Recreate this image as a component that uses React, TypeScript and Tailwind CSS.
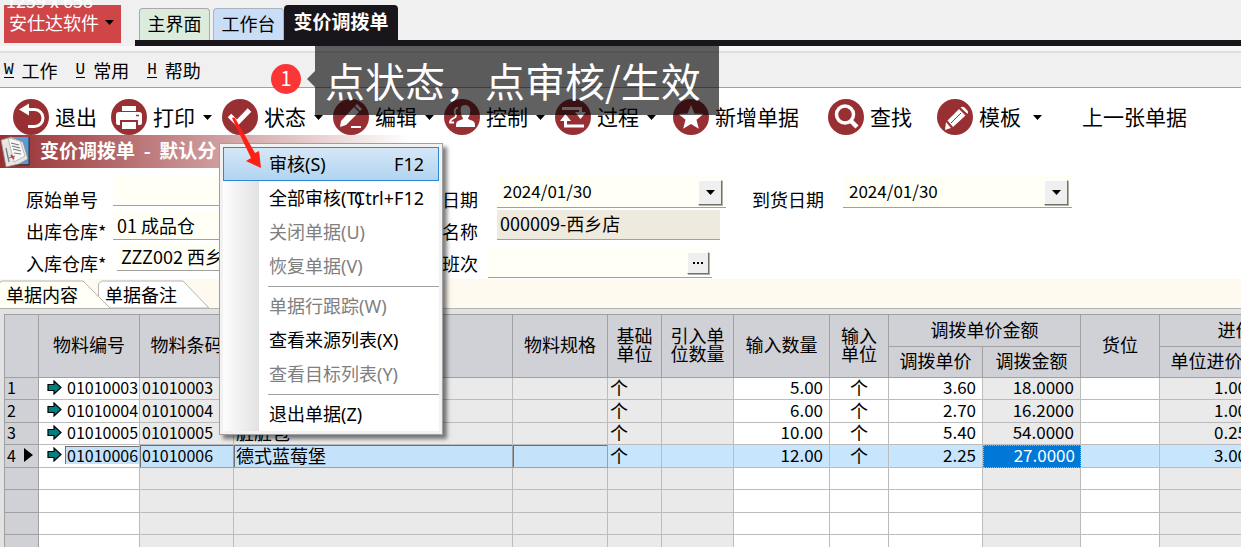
import type { ReactNode } from "react";
import clsx from "clsx";

/* ================= ICONS ================= */

const Disc = ({ children }: { children: ReactNode }) => (
  <svg viewBox="0 0 36 36" className="size-9 shrink-0" fill="none" stroke="#fff" strokeWidth="3">
    <circle cx="18" cy="18" r="18" fill="#982f32" stroke="none" />
    {children}
  </svg>
);

const icons = {
  exit: (
    <Disc>
      <path d="M14 10.500H21.500a8.500 8.500 0 0 1 0 17H15" />
      <path d="M6 10.500l10-6v12z" fill="#fff" stroke="none" />
    </Disc>
  ),
  print: (
    <Disc>
      <path d="M11 7h14v5H11zM8 13h20q3 0 3 3v8q0 2-2 2h-2v-5H9v5H7q-2 0-2-2v-8q0-3 3-3zM11 23h14v7H11z" fill="#fff" stroke="none" />
      <path d="M25 16.500h3" stroke="#982f32" strokeWidth="1.500" />
    </Disc>
  ),
  check: (
    <Disc>
      <path d="M7.500 16.500l7.500 7.500L27.500 11" strokeWidth="5" />
    </Disc>
  ),
  edit: (
    <Disc>
      <path d="M8 22L21 8l5 5-13 13-6 2zM22 7l2-2 5 5-2 2zM18 27h10v2H18z" fill="#fff" stroke="none" />
    </Disc>
  ),
  people: (
    <Disc>
      <path d="M21 6c4 0 6 3 5 8 0 3-2 4-2 6l5 2c2 1 2 3 2 6H12c0-3 0-5 2-6l5-2c0-2-2-3-2-6-1-5 0-8 4-8z" fill="#fff" stroke="none" />
      <path d="M14 8.500c-4 1-4 5-2 8 0 2-1 2-3 3s-3 2-3 4h4" strokeWidth="1.800" />
    </Disc>
  ),
  process: (
    <Disc>
      <path d="M7 9.500h18.500V14M10.500 21v6H29" />
      <path d="M20 13h11l-5.500 7zM5 22h11l-5.500-7z" fill="#fff" stroke="none" />
    </Disc>
  ),
  star: (
    <Disc>
      <path d="M18 6l3.500 8.500 9 .6-7 5.700 2.300 9L18 25l-7.800 4.800 2.300-9-7-5.700 9-.6z" fill="#fff" stroke="none" />
    </Disc>
  ),
  search: (
    <Disc>
      <circle cx="17" cy="15.500" r="8.500" strokeWidth="3.500" />
      <path d="M23 22l6 6" strokeWidth="4.500" />
    </Disc>
  ),
  template: (
    <Disc>
      <path d="M8 31l1-8 5 6zM10.500 21.500L22 10l6.500 6.500L16 28zM23.500 8.500q2-1.500 4 0l2.500 2.500q2 2 .5 4z" fill="#fff" stroke="none" />
      <path d="M14 24l10-10" stroke="#982f32" strokeWidth="1" />
    </Disc>
  ),
};

const Caret = ({ className = "" }: { className?: string }) => (
  <svg viewBox="0 0 9 5" className={clsx("h-[5px] w-[9px] shrink-0", className)} fill="currentColor" aria-hidden="true">
    <path d="M0 0h9L4.500 5z" />
  </svg>
);

const RowArrow = () => (
  <svg viewBox="0 0 15 15" className="h-[15px] w-[15px] shrink-0" aria-hidden="true">
    <path d="M1 4.500h6V1l7 6.500L7 14v-3.500H1z" fill="#008080" stroke="#000" strokeWidth="1.200" />
  </svg>
);

/* ================= DATA ================= */

type Tool = { label: string; icon?: keyof typeof icons; caret?: string; gap: string };

const tools: Tool[] = [
  { label: "退出", icon: "exit", gap: "ml-[13px]" },
  { label: "打印", icon: "print", caret: "ml-2", gap: "ml-3.5" },
  { label: "状态", icon: "check", caret: "ml-2", gap: "ml-2.5" },
  { label: "编辑", icon: "edit", caret: "ml-2", gap: "ml-2.5" },
  { label: "控制", icon: "people", caret: "ml-2", gap: "ml-2.5" },
  { label: "过程", icon: "process", caret: "ml-2", gap: "ml-2.5" },
  { label: "新增单据", icon: "star", gap: "ml-[17px]" },
  { label: "查找", icon: "search", gap: "ml-[29px]" },
  { label: "模板", icon: "template", caret: "ml-3", gap: "ml-[25px]" },
  { label: "上一张单据", gap: "ml-10" },
];

type Item = { label: string; keys?: string; off?: boolean; on?: boolean } | null;

const menu: Item[] = [
  { label: "审核(S)", keys: "F12", on: true },
  { label: "全部审核(T)", keys: "Ctrl+F12" },
  { label: "关闭单据(U)", off: true },
  { label: "恢复单据(V)", off: true },
  null,
  { label: "单据行跟踪(W)", off: true },
  { label: "查看来源列表(X)" },
  { label: "查看目标列表(Y)", off: true },
  null,
  { label: "退出单据(Z)" },
];

const rows = [
  { code: "01010003", name: "", qty: "5.00", price: "3.60", sum: "18.0000", cost: "1.00" },
  { code: "01010004", name: "", qty: "6.00", price: "2.70", sum: "16.2000", cost: "1.00" },
  { code: "01010005", name: "脏脏包", qty: "10.00", price: "5.40", sum: "54.0000", cost: "0.25" },
  { code: "01010006", name: "德式蓝莓堡", qty: "12.00", price: "2.25", sum: "27.0000", cost: "3.00", active: true },
];

/* ================= PARTS ================= */

const field = "block border-b border-[#a0a0a0] bg-[#fffff5] text-lg outline-none";
const raised = "flex shrink-0 items-center justify-center border border-t-white border-l-white border-r-[#707070] border-b-[#707070] bg-[#efefef] shadow-[1px_1px_0_#b0b0b0]";
const formLabel = "flex h-8 items-center whitespace-nowrap";

function DateField({ id }: { id: string }) {
  return (
    <div className="flex h-8 w-[229px] border-b border-[#a0a0a0] bg-[#fffff5] pr-1">
      <input id={id} defaultValue="2024/01/30" className="min-w-0 flex-1 pb-0.5 pl-1.5 text-[17px] outline-none" />
      <button type="button" aria-label="选择日期" className={clsx(raised, "mt-1 h-[25px] w-6")}>
        <Caret />
      </button>
    </div>
  );
}

function StatusMenu() {
  return (
    <div role="menu" className="absolute top-[143px] left-[219px] z-20 w-56 border border-[#a0a0a0] bg-[#f2f2f2] p-[3px] font-['Noto_Sans','Noto_Sans_CJK_SC',sans-serif] shadow-[4px_4px_4px_rgba(0,0,0,0.5)]">
      <div className="bg-[linear-gradient(to_right,#fdfdfd,#e2e2e2_36px,#fff_36px)]">
        {menu.map((item, i) =>
          item ? (
            <button
              key={i}
              role="menuitem"
              disabled={item.off}
              className={clsx(
                "relative flex h-[34px] w-full items-center border pl-[45px] whitespace-nowrap",
                item.on ? "border-[#2a8ad9] bg-linear-to-b from-[#d6e7f6] to-[#b1d4f1]" : "border-transparent",
                item.off && "text-[#808080]"
              )}
            >
              {item.label}
              {item.keys && <span className="absolute right-3.5">{item.keys}</span>}
            </button>
          ) : (
            <div key={i} role="separator" className="ml-[45px] flex h-1.5 items-center">
              <span className="h-px w-full bg-[#a0a0a0]" />
            </div>
          )
        )}
      </div>
    </div>
  );
}

function ItemsTable() {
  const th = "border-r border-b border-[#a0a0a0] bg-[#d0d1d7] p-0 pb-1 font-normal leading-[18px]";
  const gray = "border-r border-b border-[#bcbcbc] bg-[#eaeaea]";
  const white = "border-r border-b border-[#bcbcbc] bg-white";
  const blue = "border-r border-b border-[#bcbcbc] bg-[#c8e5fe]";
  const sunk = "border-r border-b border-[#a0a0a0] bg-[#c5e2fb] shadow-[inset_1px_1px_0_#707070]";
  const picked = "bg-[#0078d7] text-white outline-1 -outline-offset-1 outline-dotted outline-[#ff9a3c]";
  const num = "pr-1.5 text-right text-[17px]";
  const code = "pl-0.5 text-base";

  return (
    <table className="w-[1344px] table-fixed border-separate border-spacing-0 border-t border-l border-[#a0a0a0]">
      <colgroup>
        <col className="w-[34px]" />
        <col className="w-[101px]" />
        <col className="w-[94px]" />
        <col className="w-[279px]" />
        <col className="w-[95px]" />
        <col className="w-[54px]" />
        <col className="w-[72px]" />
        <col className="w-24" />
        <col className="w-[59px]" />
        <col className="w-[94px]" />
        <col className="w-[98px]" />
        <col className="w-[79px]" />
        <col className="w-[94px]" />
        <col className="w-[94px]" />
      </colgroup>
      <thead>
        <tr className="h-8">
          <th rowSpan={2} className={th} />
          <th rowSpan={2} className={th}>物料编号</th>
          <th rowSpan={2} className={th}>物料条码</th>
          <th rowSpan={2} className={th} />
          <th rowSpan={2} className={th}>物料规格</th>
          <th rowSpan={2} className={th}>基础<br />单位</th>
          <th rowSpan={2} className={th}>引入单<br />位数量</th>
          <th rowSpan={2} className={th}>输入数量</th>
          <th rowSpan={2} className={th}>输入<br />单位</th>
          <th colSpan={2} className={th}>调拨单价金额</th>
          <th rowSpan={2} className={th}>货位</th>
          <th colSpan={2} className={th}>进价金额</th>
        </tr>
        <tr className="h-[31px]">
          <th className={th}>调拨单价</th>
          <th className={th}>调拨金额</th>
          <th className={th}>单位进价</th>
          <th className={th} />
        </tr>
      </thead>
      <tbody className="leading-[18px]">
        {rows.map((r, i) => {
          const g = r.active ? blue : gray;
          const w = r.active ? blue : white;
          const s = r.active ? sunk : gray;
          return (
            <tr key={r.code} className="h-[22px] even:h-[23px] [&>td]:overflow-hidden [&>td]:pt-0 [&>td]:pb-[3px] [&>td]:whitespace-nowrap">
              <td className="border-r border-b border-[#a0a0a0] bg-[#d0d1d7] pl-0.5 text-base leading-[18px]">
                <span className="flex items-center gap-2">
                  {i + 1}
                  {r.active && (
                    <svg viewBox="0 0 9 14" className="h-3.5 w-[9px]">
                      <path d="M0 0l9 7-9 7z" />
                    </svg>
                  )}
                </span>
              </td>
              <td className={clsx(white, "p-0 text-base leading-[18px]")}>
                <span className="flex items-center pl-2">
                  <RowArrow />
                  <span className={clsx("ml-[3px] flex-1 overflow-hidden pl-0.5", r.active && "bg-[#c5e2fb] shadow-[inset_1px_1px_0_#707070]")}>{r.code}</span>
                </span>
              </td>
              <td className={clsx(s, code, "leading-[18px]")}>{r.code}</td>
              <td className={clsx(s, "pl-0.5")}>{r.name}</td>
              <td className={s} />
              <td className={clsx(g, "pl-0.5")}>个</td>
              <td className={g} />
              <td className={clsx(w, num, "leading-[18px]")}>{r.qty}</td>
              <td className={clsx(w, "text-center")}>个</td>
              <td className={clsx(w, num, "leading-[18px]")}>{r.price}</td>
              <td className={clsx(r.active ? picked : gray, num, "leading-[18px]")}>{r.sum}</td>
              <td className={w} />
              <td className={clsx(g, num, "leading-[18px]")}>{r.cost}</td>
              <td className={g} />
            </tr>
          );
        })}
        {[0, 1, 2, 3].map((n) => (
          <tr key={n} className="h-[22px] even:h-[23px]">
            <td className="border-r border-b border-[#a0a0a0] bg-[#d0d1d7]" />
            <td className={white} />
            <td className={gray} />
            <td className={gray} />
            <td className={gray} />
            <td className={gray} />
            <td className={gray} />
            <td className={white} />
            <td className={white} />
            <td className={white} />
            <td className={gray} />
            <td className={white} />
            <td className={gray} />
            <td className={gray} />
          </tr>
        ))}
      </tbody>
    </table>
  );
}

/* ================= PAGE ================= */

export default function App() {
  return (
    <div className="relative h-screen w-full overflow-hidden bg-white font-['Noto_Sans_CJK_SC',sans-serif] text-lg leading-6 text-black">

      {/* brand + window tabs */}
      <header className="flex h-[46px] bg-[#f0f0f0]">
        <span className="absolute -top-3 left-1.5 z-10 text-lg leading-6 text-white">1259 x 658</span>
        <button className="mt-[5px] ml-1 flex h-[38px] w-[117px] shrink-0 items-center bg-[#d04547] pb-1 pl-[5px] text-white">
          安仕达软件
          <Caret className="ml-1.5 text-black" />
        </button>
        <nav className="ml-3.5 flex flex-1 items-end border-b-[6px] border-[#18161b] pl-1 whitespace-nowrap">
          <button className="h-8 w-[71px] rounded-t border border-b-0 border-[#a8a8a8] bg-[#dcecdc] pb-1">主界面</button>
          <button className="ml-[3px] h-8 w-[71px] rounded-t border border-b-0 border-[#a8b4c4] bg-[#c9ddf6] pb-1">工作台</button>
          <button className="h-[35px] w-[114px] rounded-t bg-[#18161b] pb-1 text-[19px] font-bold text-white">变价调拨单</button>
        </nav>
      </header>

      {/* menu bar */}
      <nav className="flex h-[42px] items-center gap-[18px] border-b border-[#a0a0a0] bg-[linear-gradient(#f8f8f8_5px,#dedede_5px,#dedede_7px,#f0f0f0_7px)] pt-1.5 pl-1">
        {[["W", "工作"], ["U", "常用"], ["H", "帮助"]].map(([k, label]) => (
          <button key={k} className="flex items-center gap-2">
            <span className="border-b border-black pt-0.5 font-['Liberation_Mono',monospace] text-base leading-[14px]">{k}</span>
            {label}
          </button>
        ))}
      </nav>

      {/* toolbar */}
      <div className="flex h-[47px] items-center pt-[11px] whitespace-nowrap">
        {tools.map((t) => (
          <button key={t.label} className={clsx("flex shrink-0 items-center text-[21px]", t.gap)}>
            {t.icon && <span className="mr-1.5">{icons[t.icon]}</span>}
            <span className="pb-0.5">{t.label}</span>
            {t.caret && <Caret className={t.caret} />}
          </button>
        ))}
      </div>

      {/* document title */}
      <h1 className="flex h-[33px] items-center bg-[linear-gradient(to_right,#982f32,#fff_410px)] text-[19px] font-bold whitespace-pre text-white">
        <svg viewBox="0 0 30 33" className="mr-2.5 h-[33px] w-[30px] shrink-0" aria-hidden="true">
          <path d="M12 2h17v27H16z" fill="#5b9bd5" />
          <path d="M29 2v28H14" fill="none" stroke="#16324f" strokeWidth="1" />
          <path d="M1 5l10-3 12 5 5 17-9 5-13 3z" fill="#e6e6e2" stroke="#8a8a86" strokeWidth=".8" />
          <path d="M8 3l12 3 5 15-11 6z" fill="#f8f8f6" stroke="#999" strokeWidth=".6" />
          <path d="M11 8l8 2M12 11l8 2M13 14l8 2M14 18l7 1M6 13l3 14M9 23l6-2" stroke="#77777a" strokeWidth="1.200" />
          <path d="M11 20l3 4" stroke="#b03a3a" strokeWidth="1.500" />
        </svg>
        <span className="pb-1">变价调拨单  -  默认分</span>
      </h1>

      {/* document form */}
      <form className="flex h-[111px]">
        <div className="box-content w-[87px] shrink-0 pt-[15px] pl-[26px]">
          <label htmlFor="origin" className={formLabel}>原始单号</label>
          <label htmlFor="from" className={formLabel}>出库仓库*</label>
          <label htmlFor="to" className={formLabel}>入库仓库*</label>
        </div>
        <div className="w-[329px] shrink-0 pt-2">
          <input id="origin" className={clsx(field, "h-[30px] w-[260px]")} />
          <input id="from" defaultValue="01 成品仓" className={clsx(field, "mt-1.5 h-7 w-[260px] pb-0.5 pl-1")} />
          <input id="to" defaultValue="ZZZ002 西乡店" className={clsx(field, "mt-1 ml-1 h-[27px] w-64 pb-0.5 pl-1")} />
        </div>
        <div className="w-[46px] shrink-0 pt-[15px]">
          <label htmlFor="date" className={formLabel}>日期</label>
          <label htmlFor="shop" className={formLabel}>名称</label>
          <label htmlFor="shift" className={formLabel}>班次</label>
        </div>
        <div className="w-[264px] shrink-0 pt-2">
          <div className="ml-[9px]">
            <DateField id="date" />
            <input id="shop" readOnly defaultValue="000009-西乡店" className="mt-0.5 block h-[30px] w-[223px] border-b border-[#a0a0a0] bg-[#eeeade] pb-1 pl-[3px] text-lg outline-none" />
          </div>
          <div className="mt-2 flex h-[30px] w-56 items-center border-b border-[#a0a0a0] bg-[#fffff5] pr-[3px]">
            <input id="shift" className="min-w-0 flex-1 outline-none" />
            <button type="button" aria-label="选择班次" className={clsx(raised, "size-[22px] gap-0.5")}>
              <i className="size-0.5 bg-black" />
              <i className="size-0.5 bg-black" />
              <i className="size-0.5 bg-black" />
            </button>
          </div>
        </div>
        <div className="w-[91px] shrink-0 pt-[15px]">
          <label htmlFor="arrive" className={formLabel}>到货日期</label>
        </div>
        <div className="pt-2">
          <DateField id="arrive" />
        </div>
      </form>

      {/* sheet tabs */}
      <div className="flex h-[29px] bg-[#fffaf0]" role="tablist">
        <button role="tab" aria-selected="true" className="relative z-10 w-[110px] pl-1.5 text-left">
          <svg viewBox="0 0 110 29" className="absolute inset-0" aria-hidden="true">
            <path d="M0 4q0-2 2-2h81l27 27H0z" fill="#fffff5" />
            <path d="M0 4q0-2 2-2h81l27 27" fill="none" stroke="#b4b4b4" />
          </svg>
          <span className="relative">单据内容</span>
        </button>
        <button role="tab" aria-selected="false" className="relative -ml-3 w-[111px] pl-[7px] text-left">
          <svg viewBox="0 0 111 29" className="absolute inset-0" aria-hidden="true">
            <path d="M.5 29V5l3-3H85l26 27z" fill="#fff" stroke="#b4b4b4" />
          </svg>
          <span className="relative">单据备注</span>
        </button>
      </div>

      {/* item grid */}
      <main className="overflow-hidden border-t border-[#b4b4b4] bg-[#e2e2e2] pt-[5px] pl-1">
        <ItemsTable />
      </main>

      <StatusMenu />

      {/* step callout */}
      <div className="absolute top-16 left-[271px] z-30 flex size-[30px] items-center justify-center rounded-full bg-[#fc3536] pb-0.5 text-xl text-white">1</div>
      <div className="absolute top-[46px] left-[315px] z-30 h-[69px] bg-black/62 pr-[18px] pl-2.5 text-[40px] leading-[68px] whitespace-nowrap text-white">
        <svg viewBox="0 0 8 16" className="absolute top-[25px] -left-2 h-4 w-2" aria-hidden="true">
          <path d="M8 0v16L0 8z" fill="rgba(0,0,0,.62)" />
        </svg>
        点状态，点审核/生效
      </div>
      <svg viewBox="0 0 30 52" className="absolute top-[117px] left-[232px] z-30 h-[52px] w-[30px]" aria-hidden="true">
        <path d="M0 1q2-1 3 0l20 35 4-2 2 17-15-7 5-3z" fill="#ff2015" />
      </svg>
    </div>
  );
}
